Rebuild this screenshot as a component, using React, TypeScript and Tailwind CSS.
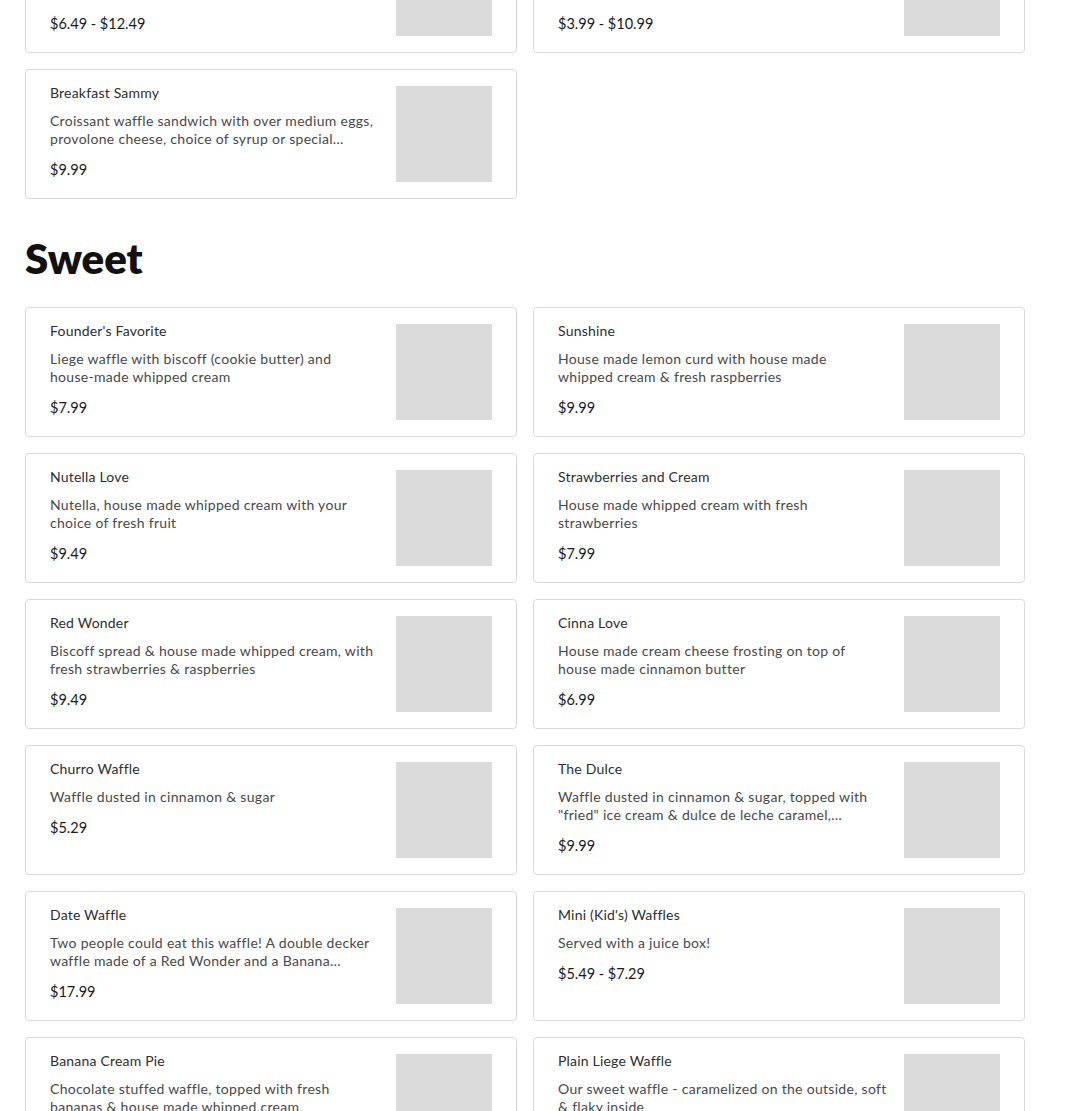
import type { ReactNode } from "react";

type MenuItem = {
  name: string;
  description: ReactNode;
  price: string;
};

type MenuSection = {
  title?: string;
  items: MenuItem[];
};

const sections: MenuSection[] = [
  {
    items: [
      {
        name: "Chicken & Waffle",
        description:
          "Liege waffle with crispy fried chicken, topped with a drizzle of maple syrup & a sprinkle of something good",
        price: "$6.49 - $12.49",
      },
      {
        name: "Savory Waffle",
        description:
          "Plain savory waffle, great on its own or with your pick of toppings and spreads",
        price: "$3.99 - $10.99",
      },
      {
        name: "Breakfast Sammy",
        description: "Croissant waffle sandwich with over medium eggs, provolone cheese, choice of syrup or special…",
        price: "$9.99",
      },
    ],
  },
  {
    title: "Sweet",
    items: [
      {
        name: "Founder's Favorite",
        description: (
          <>
            Liege waffle with biscoff (cookie butter) and <span className="whitespace-nowrap">house-made</span> whipped cream
          </>
        ),
        price: "$7.99",
      },
      {
        name: "Sunshine",
        description: (
          <>
            House made lemon curd with house made <span className="whitespace-nowrap">whipped cream</span> & fresh raspberries
          </>
        ),
        price: "$9.99",
      },
      {
        name: "Nutella Love",
        description: "Nutella, house made whipped cream with your choice of fresh fruit",
        price: "$9.49",
      },
      {
        name: "Strawberries and Cream",
        description: "House made whipped cream with fresh strawberries",
        price: "$7.99",
      },
      {
        name: "Red Wonder",
        description: "Biscoff spread & house made whipped cream, with fresh strawberries & raspberries",
        price: "$9.49",
      },
      {
        name: "Cinna Love",
        description: (
          <>
            House made cream cheese frosting on top of <span className="whitespace-nowrap">house made</span> cinnamon butter
          </>
        ),
        price: "$6.99",
      },
      {
        name: "Churro Waffle",
        description: "Waffle dusted in cinnamon & sugar",
        price: "$5.29",
      },
      {
        name: "The Dulce",
        description: 'Waffle dusted in cinnamon & sugar, topped with "fried" ice cream & dulce de leche caramel,…',
        price: "$9.99",
      },
      {
        name: "Date Waffle",
        description: "Two people could eat this waffle! A double decker waffle made of a Red Wonder and a Banana…",
        price: "$17.99",
      },
      {
        name: "Mini (Kid's) Waffles",
        description: "Served with a juice box!",
        price: "$5.49 - $7.29",
      },
      {
        name: "Banana Cream Pie",
        description: "Chocolate stuffed waffle, topped with fresh bananas & house made whipped cream",
        price: "$9.49",
      },
      {
        name: "Plain Liege Waffle",
        description: "Our sweet waffle - caramelized on the outside, soft & flaky inside",
        price: "$3.99",
      },
    ],
  },
];

function ItemCard({ item }: { item: MenuItem }) {
  return (
    <div className="flex gap-4 rounded-[4px] border border-[#d9d9d9] bg-white px-6 py-4">
      <div className="flex min-w-0 flex-1 flex-col">
        <p className="text-[14px] leading-[14px] tracking-[0.2px] text-[#2e2e2e]">{item.name}</p>
        <p className="mt-[12px] line-clamp-2 text-[14px] leading-[18px] tracking-[0.3px] text-[#494949]">
          {item.description}
        </p>
        <p className="mt-[12px] text-[14.5px] leading-[20px] text-[#1a1a1a]">{item.price}</p>
      </div>
      <div className="h-24 w-24 shrink-0 bg-[#dbdbdb]" />
    </div>
  );
}

export default function App() {
  return (
    <div className="min-h-screen bg-white font-['Lato','Liberation_Sans',sans-serif]">
      <div className="ml-[25px] -mt-[77px] w-[1000px] pb-10">
        {sections.map((section, index) => (
          <section key={index}>
            {section.title && (
              <h2 className="mt-[35px] mb-[25px] text-[42px] font-extrabold leading-[48px] text-[#111]">
                {section.title}
              </h2>
            )}
            <div className="grid grid-cols-2 gap-4">
              {section.items.map((item) => (
                <ItemCard key={item.name} item={item} />
              ))}
            </div>
          </section>
        ))}
      </div>
    </div>
  );
}
